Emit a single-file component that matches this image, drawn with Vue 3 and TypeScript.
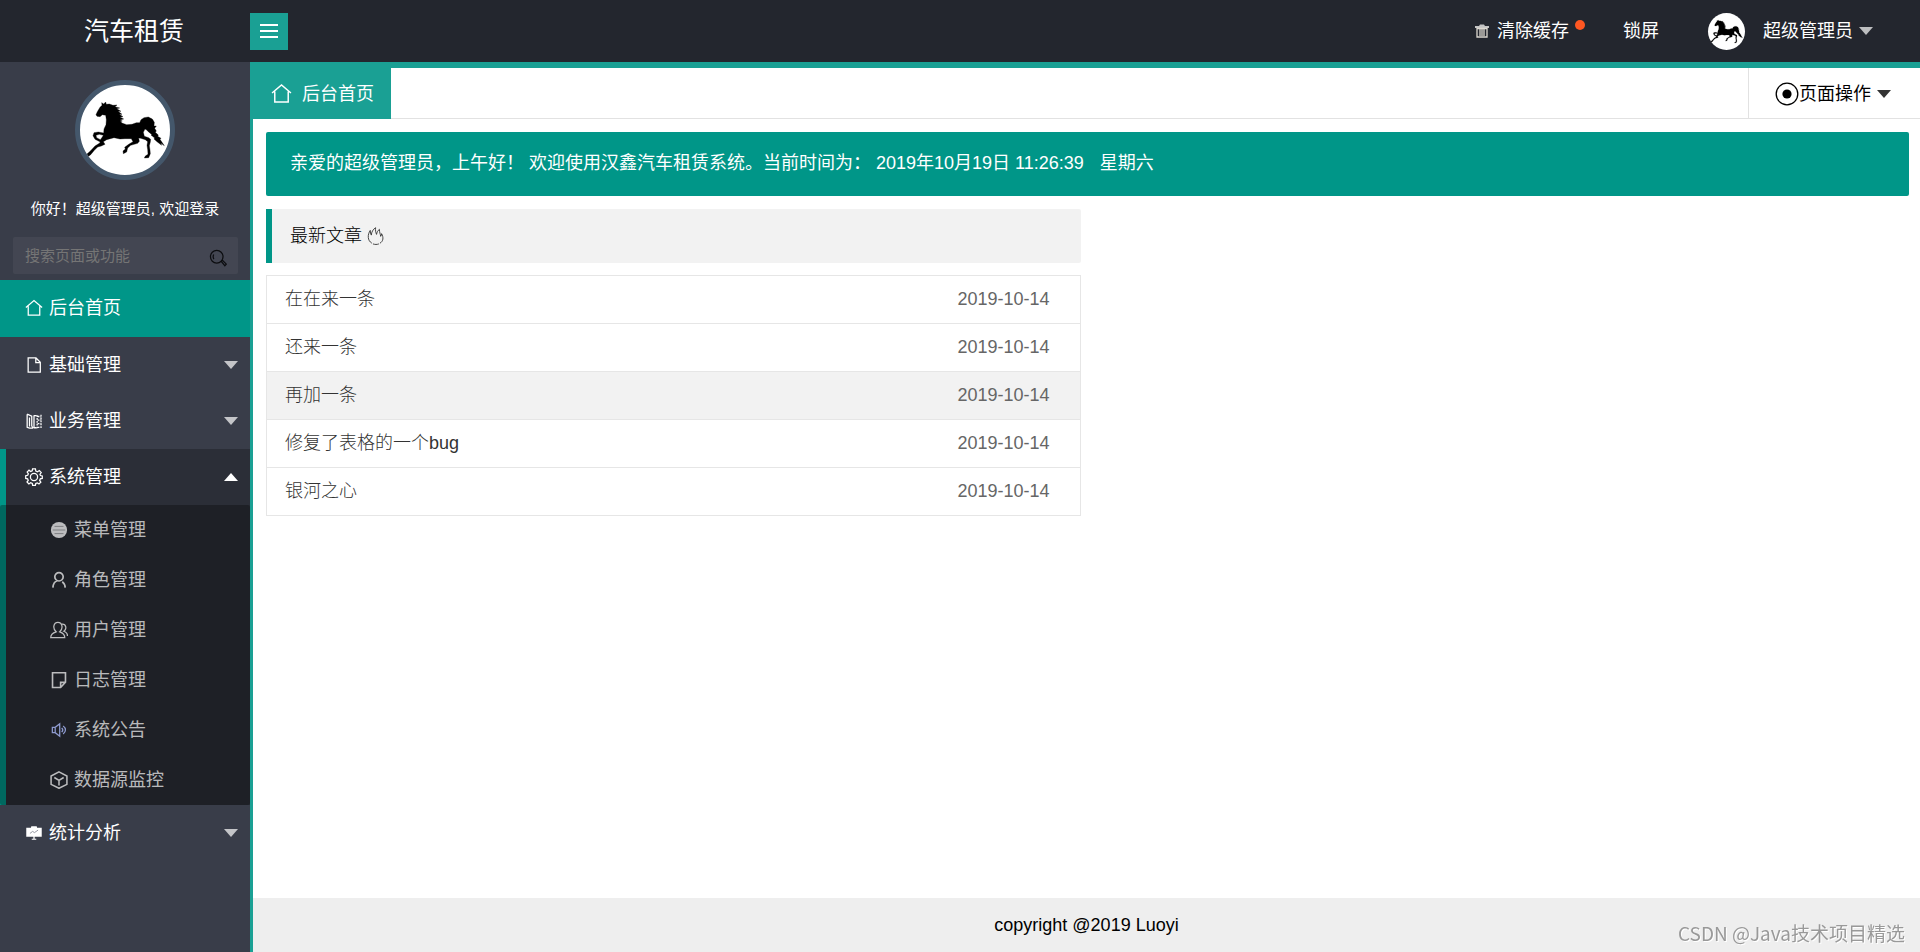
<script setup lang="ts">
import { ref } from 'vue'

interface MenuItem {
  title: string
  icon: string
  active?: boolean
  open?: boolean
  children?: { title: string; icon: string }[]
}

interface Article {
  title: string
  date: string
  hover?: boolean
}

const keyword = ref('')

const menu = ref<MenuItem[]>([
  { title: '后台首页', icon: 'home', active: true },
  { title: '基础管理', icon: 'file', children: [] },
  { title: '业务管理', icon: 'book', children: [] },
  {
    title: '系统管理',
    icon: 'gear',
    open: true,
    children: [
      { title: '菜单管理', icon: 'disc' },
      { title: '角色管理', icon: 'person' },
      { title: '用户管理', icon: 'people' },
      { title: '日志管理', icon: 'note' },
      { title: '系统公告', icon: 'sound' },
      { title: '数据源监控', icon: 'cube' },
    ],
  },
  { title: '统计分析', icon: 'board', children: [] },
])

const articles: Article[] = [
  { title: '在在来一条', date: '2019-10-14' },
  { title: '还来一条', date: '2019-10-14' },
  { title: '再加一条', date: '2019-10-14', hover: true },
  { title: '修复了表格的一个bug', date: '2019-10-14' },
  { title: '银河之心', date: '2019-10-14' },
]

const toggle = (item: MenuItem) => {
  item.open = !item.open
}
</script>

<template>
  <!-- shared drawings -->
  <svg class="sprite" aria-hidden="true">
    <symbol id="horse" viewBox="30 30 270 270">
      <path d="M78 119 L82 110 L90 97 L96 91 L95 83 L101 87 L107 81 L109 88 L118 87 L129 91 L141 90 L135 95 L149 99 L140 101 L153 109 L144 109 L156 118 L148 118 L159 125 L150 126 L161 132 L150 135 L157 138 L151 140 L158 145 L170 149 L186 148 L199 143 L209 143 L213 134 L222 128 L235 126 L247 132 L253 142 L252 153 L259 153 L254 160 L259 168 L256 172 L265 180 L263 184 L273 190 L270 193 L283 212 L272 204 L275 211 L261 200 L252 192 L254 189 L243 180 L246 179 L235 170 L229 164 L225 162 L220 172 L223 184 L236 188 L242 193 L241 201 L238 212 L240 225 L241 236 L236 248 L223 249 L226 243 L234 238 L233 224 L231 211 L233 200 L226 194 L212 190 L206 189 L208 199 L203 205 L182 211 L173 219 L170 231 L160 236 L159 228 L166 222 L164 217 L176 208 L189 200 L184 191 L165 191 L150 192 L132 188 L110 194 L100 200 L105 208 L94 213 L83 216 L73 226 L62 239 L52 247 L50 238 L61 228 L75 213 L88 205 L91 201 L75 193 L69 182 L72 173 L85 171 L101 174 L102 162 L108 149 L109 134 L107 121 L97 119 L90 125 L81 124 Z M78 181 L80 188 L91 194 L97 186 L100 181 L88 178 Z" fill="#000" fill-rule="evenodd" stroke="#000" stroke-width="1" stroke-linejoin="round" />
    </symbol>
    <symbol id="home" viewBox="0 0 20 20">
      <path d="M1 9.5 L10 1.8 L19 9.5 M3.6 8 V18 H16.4 V8" />
    </symbol>
    <symbol id="file" viewBox="0 0 20 20">
      <path d="M3.5 2.2 H12.2 L17 7 V18 H3.5 Z M12 2.2 V7.3 H17" />
    </symbol>
    <symbol id="book" viewBox="0 0 20 20">
      <path d="M2.4 2.4 V17 L5 18 H9 M2.4 2.4 L7.5 4.5 V15.5 L9 18 M5 6 V16 M10 3.5 V18 M10 4 H13 M10 17.5 H13" />
      <path d="M13.5 3.5 V18 M17.8 3 V18 M14 5 H18 M14 9 H18 M14 13 H18 M14 17 H18" stroke-dasharray="2 1.2" />
    </symbol>
    <symbol id="gear" viewBox="0 0 20 20">
      <path d="M8.4 1 H11.6 L12 3.4 L13.9 4.2 L15.9 2.8 L18 5 L16.6 7 L17.2 8.4 L19.2 8.8 V11.6 L17 12 L16.3 13.8 L17.6 15.7 L15.5 17.8 L13.7 16.5 L12 17.2 L11.5 19.2 H8.5 L8.1 17.2 L6.3 16.4 L4.3 17.8 L2.2 15.6 L3.6 13.7 L2.9 12 L.8 11.6 V8.6 L3 8.1 L3.7 6.4 L2.4 4.5 L4.5 2.4 L6.3 3.8 L8 3.1 Z" />
      <circle cx="10" cy="10.1" r="4" />
    </symbol>
    <symbol id="disc" viewBox="0 0 20 20">
      <circle cx="10" cy="10" r="9" fill="currentColor" stroke="none" />
      <path d="M5 6 H15 M3 10 H17 M5 14 H15" stroke="#77787a" stroke-width="1" />
    </symbol>
    <symbol id="person" viewBox="0 0 20 20">
      <path d="M3.2 18.5 C3.6 13.8 5.5 11.5 8 10.8 M10 1.8 a4.6 4.6 0 1 1 0 9.3 a4.6 4.6 0 1 1 0 -9.3 M13.6 12 C15.8 13.6 16.7 15.6 16.9 18.5" stroke-width="1.9" />
    </symbol>
    <symbol id="people" viewBox="0 0 20 20">
      <path d="M.8 18.6 C.8 14.6 3 13.2 6.8 12 C2.6 8.4 3.8 1.4 8.8 1.4 C13.8 1.4 15 8.4 10.8 12 C14.6 13.2 16.4 14.6 16.4 18.6 Z M13.2 3.6 C18 3 19 9 15.4 11.4 C18.2 12.4 19.4 14 19.4 16.6" />
    </symbol>
    <symbol id="note" viewBox="0 0 20 20">
      <path d="M2.8 2 H17.2 V12.5 L11.8 18.3 H2.8 Z M17.2 12.6 H11.8 V18.3" stroke-width="1.8" />
    </symbol>
    <symbol id="sound" viewBox="0 0 20 20">
      <path d="M2.6 7 H5.8 L10.8 3 V17 L5.8 13 H2.6 Z M5.8 7 V13 M13 7.6 C14.4 9 14.4 11 13 12.4 M14.6 5.6 C18 8 18 12 14.6 14.4" />
    </symbol>
    <symbol id="cube" viewBox="0 0 20 20">
      <path d="M10 1 L18.8 5.6 V14.8 L10 19.2 L1.2 14.8 V5.6 Z M4.8 7.2 L10 10.4 L15.2 7.2 M10 10.4 V16" stroke-width="1.7" />
    </symbol>
    <symbol id="board" viewBox="0 0 20 20">
      <path d="M1.4 4.2 H6.6 L7 2.4 H13 L13.4 4.2 H18.6 V14.2 H1.4 Z M9.3 14 H10.7 V16.4 H12.5 V17.6 H7.5 V16.4 H9.3 Z" fill="currentColor" stroke="none" />
      <path d="M5.5 10.5 L8.5 8.2 L10.5 9.6 L14.5 6.8" stroke="#8a8d98" stroke-width="1" />
    </symbol>
    <symbol id="search" viewBox="0 0 20 20">
      <circle cx="8.6" cy="8.6" r="7" />
      <path d="M5.2 6.2 C4.4 8 4.6 10 5.4 11.2 M13.6 13.8 L15 12.6 L19.2 16.8 L17.6 18.6 Z" />
    </symbol>
    <symbol id="trash" viewBox="0 0 14 14">
      <path d="M0 2 H4 L5 .6 H9 L10 2 H14 V4 H0 Z" fill="#c4c4c4" stroke="none" />
      <path d="M2 4.5 H12 V13 H2 Z M5 5 V12 M7 5 V12 M9 5 V12" stroke="#dcd8d0" stroke-width="1.3" />
    </symbol>
    <symbol id="flame" viewBox="0 0 20 20">
      <path d="M5.4 18 C.4 15 .4 8.6 3.6 3.8 C3.6 6 4 7.6 4.8 9 C5 5.6 6.6 2.6 9.6 .8 C9.2 3.4 9.6 6 10.6 8.2 C11 5.8 12 4 13.8 2.6 C13.8 6 14.8 7.6 15.2 10.4 C16 9.6 16.2 8.6 16.2 7.4 C18.6 11.6 18.2 15.8 14.4 18 M6.6 18.8 C9 19.6 11 19.6 13.2 18.8" stroke-width="1" />
    </symbol>
    <symbol id="target" viewBox="0 0 24 24">
      <circle cx="12" cy="12" r="10.8" stroke-width="1.3" />
      <circle cx="12" cy="12" r="4.6" fill="currentColor" stroke="none" />
    </symbol>
  </svg>

  <div class="layout">
    <header class="header">
      <h1 class="logo">汽车租赁</h1>
      <button class="fold" type="button" aria-label="菜单"><i></i><i></i><i></i></button>
      <nav class="top-nav">
        <button class="clear" type="button">
          <svg class="trash"><use href="#trash" /></svg>清除缓存<span class="dot"></span>
        </button>
        <button class="lock" type="button">锁屏</button>
        <button class="user" type="button">
          <svg class="face"><use href="#horse" /></svg>
          <span>超级管理员</span><span class="caret"></span>
        </button>
      </nav>
    </header>

    <aside class="side">
      <a class="portrait" href="#" aria-label="头像"><svg><use href="#horse" /></svg></a>
      <p class="hello">你好！超级管理员, 欢迎登录</p>
      <form class="search" @submit.prevent>
        <input v-model="keyword" type="text" placeholder="搜索页面或功能" aria-label="搜索页面或功能" />
        <button type="submit" aria-label="搜索"><svg class="icon"><use href="#search" /></svg></button>
      </form>
      <ul class="menu">
        <li v-for="item in menu" :key="item.title" :class="{ active: item.active, open: item.open }">
          <a v-if="!item.children" class="entry" href="#">
            <svg class="icon"><use :href="'#' + item.icon" /></svg>{{ item.title }}
          </a>
          <button v-else class="entry" type="button" @click="toggle(item)">
            <svg class="icon"><use :href="'#' + item.icon" /></svg>{{ item.title }}
            <span class="caret" :class="{ up: item.open }"></span>
          </button>
          <ul v-if="item.open && item.children" class="sub">
            <li v-for="child in item.children" :key="child.title">
              <a href="#" :class="child.icon"><svg class="icon"><use :href="'#' + child.icon" /></svg>{{ child.title }}</a>
            </li>
          </ul>
        </li>
      </ul>
    </aside>

    <section class="body">
      <div class="tabs">
        <a class="tab" href="#"><svg><use href="#home" /></svg>后台首页</a>
        <button class="page-ops" type="button">
          <svg><use href="#target" /></svg>页面操作<span class="caret"></span>
        </button>
      </div>
      <main class="content">
        <p class="banner">
          <span>亲爱的超级管理员，上午好！ 欢迎使用汉鑫汽车租赁系统。当前时间为： 2019年10月19日 11:26:39</span>
          <span>星期六</span>
        </p>
        <div class="column">
          <h2 class="quote">最新文章 <svg><use href="#flame" /></svg></h2>
          <table class="articles">
            <tbody>
              <tr v-for="row in articles" :key="row.title" :class="{ hover: row.hover }">
                <td><a href="#">{{ row.title }}</a></td>
                <td class="date">{{ row.date }}</td>
              </tr>
            </tbody>
          </table>
        </div>
      </main>
      <footer class="footer">copyright @2019 Luoyi</footer>
    </section>
  </div>
  <div class="watermark">CSDN @Java技术项目精选</div>
</template>

<style>
body {
  margin: 0;
}
</style>

<style scoped>
.layout,
.watermark {
  font-family: 'Liberation Sans', 'Noto Sans CJK SC', sans-serif;
}
.layout {
  display: grid;
  grid-template: 62px 1fr / 250px 1fr;
  min-height: 100vh;
  font-size: 18px;
  line-height: 24px;
  color: #000;
}
.sprite {
  position: absolute;
  width: 0;
  height: 0;
}
svg {
  display: block;
  flex: none;
  fill: none;
  stroke: currentColor;
  stroke-width: 1.4;
}
button {
  padding: 0;
  border: 0;
  background: none;
  font: inherit;
  color: inherit;
  cursor: pointer;
}
a {
  color: inherit;
  text-decoration: none;
}
ul {
  margin: 0;
  padding: 0;
  list-style: none;
}
.icon {
  width: 18px;
  height: 18px;
}
.caret {
  border: 7px solid transparent;
  border-top: 8px solid rgba(255, 255, 255, 0.7);
  border-bottom: 0;
}
.caret.up {
  border-top: 0;
  border-bottom: 8px solid #fff;
}

.header {
  grid-column: 1 / 3;
  display: flex;
  align-items: center;
  background: #23262e;
  color: #fff;
}
.logo {
  width: 250px;
  margin: 0;
  padding-left: 18px;
  box-sizing: border-box;
  font-size: 25px;
  font-weight: 400;
  text-align: center;
}
.fold {
  display: flex;
  flex-direction: column;
  align-items: center;
  justify-content: center;
  gap: 4px;
  width: 38px;
  height: 37px;
  background: #1aa094;
}
.fold i {
  width: 18px;
  height: 2px;
  background: #fff;
}
.top-nav {
  display: flex;
  align-items: center;
  margin-left: auto;
  padding-right: 47px;
}
.top-nav button {
  display: flex;
  align-items: center;
}
.trash {
  width: 14px;
  height: 14px;
  margin-right: 8px;
}
.dot {
  width: 10px;
  height: 10px;
  margin: 0 38px 12px 6px;
  border-radius: 50%;
  background: #ff5722;
}
.face {
  width: 37px;
  height: 37px;
  margin: 0 18px 0 49px;
  border-radius: 50%;
  background: #fff;
}
.user .caret {
  margin-left: 6px;
}

.side {
  background: #393d49;
  color: #fff;
}
.portrait {
  display: block;
  width: 90px;
  margin: 18px auto 0;
  border: 5px solid #44576b;
  border-radius: 50%;
  background: #fff;
  overflow: hidden;
}
.portrait svg {
  width: 90px;
  height: 90px;
}
.hello {
  margin: 17px 0 16px;
  font-size: 15px;
  text-align: center;
}
.search {
  display: flex;
  align-items: center;
  height: 37px;
  margin: 0 12px 6px 13px;
  border-radius: 2px;
  background: rgba(255, 255, 255, 0.05);
}
.search input {
  flex: 1;
  min-width: 0;
  padding: 0 0 0 12px;
  border: 0;
  outline: 0;
  background: none;
  font: inherit;
  font-size: 15px;
  color: #fff;
}
.search input::placeholder {
  color: #757575;
}
.search button {
  margin-right: 11px;
  padding-top: 4px;
  color: #0c0d10;
}
.entry {
  display: flex;
  align-items: center;
  gap: 6px;
  width: 100%;
  height: 56px;
  padding: 0 12px 0 25px;
  box-sizing: border-box;
}
.entry .caret {
  margin-left: auto;
}
.active {
  border-bottom: 1px solid #009688;
  background: #009688;
}
.open {
  background: linear-gradient(to right, #009688 6px, #2b2e37 6px);
}
.sub {
  border-radius: 2px;
  background: rgba(0, 0, 0, 0.3);
  color: rgba(255, 255, 255, 0.7);
}
.sub a {
  display: flex;
  align-items: center;
  gap: 6px;
  height: 50px;
  padding-left: 50px;
}
.sub .sound svg {
  color: #8f9bd0;
}

.body {
  display: flex;
  flex-direction: column;
  min-width: 0;
  border-top: 6px solid #1aa094;
  border-left: 3px solid #1aa094;
  background: #fff;
}
.tabs {
  display: flex;
  height: 51px;
  box-shadow: inset 0 -1px #e2e2e2;
}
.tab {
  display: flex;
  align-items: center;
  gap: 10px;
  padding: 0 17px 0 18px;
  background: #1aa094;
  color: #fff;
}
.tab svg {
  width: 21px;
  height: 21px;
}
.page-ops {
  display: flex;
  align-items: center;
  margin-left: auto;
  padding: 0 29px 0 26px;
  border-left: 1px solid #e2e2e2;
}
.page-ops svg {
  width: 24px;
  height: 24px;
}
.page-ops .caret {
  margin-left: 6px;
  border-top-color: #333;
}
.content {
  flex: 1;
  padding: 13px 11px 13px 13px;
}
.banner {
  display: flex;
  gap: 16px;
  margin: 0 0 13px;
  padding: 19px 24px 21px;
  border-radius: 2px;
  background: #009688;
  color: #fff;
}
.column {
  width: 50%;
  box-sizing: border-box;
  padding-right: 7px;
}
.quote {
  display: flex;
  align-items: center;
  gap: 5px;
  margin: 0 0 12px;
  padding: 15px 18px;
  border-left: 6px solid #009688;
  border-radius: 0 2px 2px 0;
  background: #f2f2f2;
  font-size: 18px;
  font-weight: 300;
}
.quote svg {
  width: 18px;
  height: 20px;
  color: #333;
}
.articles {
  width: 100%;
  border-collapse: collapse;
  font-weight: 300;
}
.articles tr {
  border: 1px solid #e6e6e6;
}
.articles td {
  height: 45px;
  padding: 0 18px 2px;
  color: #333;
}
.articles .date {
  padding-right: 30px;
  text-align: right;
  color: #666;
}
.articles .hover {
  background: #f2f2f2;
}
.footer {
  padding: 15px;
  background: #eee;
  text-align: center;
}
.watermark {
  position: fixed;
  right: 15px;
  bottom: 6px;
  font-family: 'Noto Sans CJK SC', sans-serif;
  font-size: 19px;
  line-height: 26px;
  color: #999;
  text-shadow: 1px 1px #fff;
}
</style>
